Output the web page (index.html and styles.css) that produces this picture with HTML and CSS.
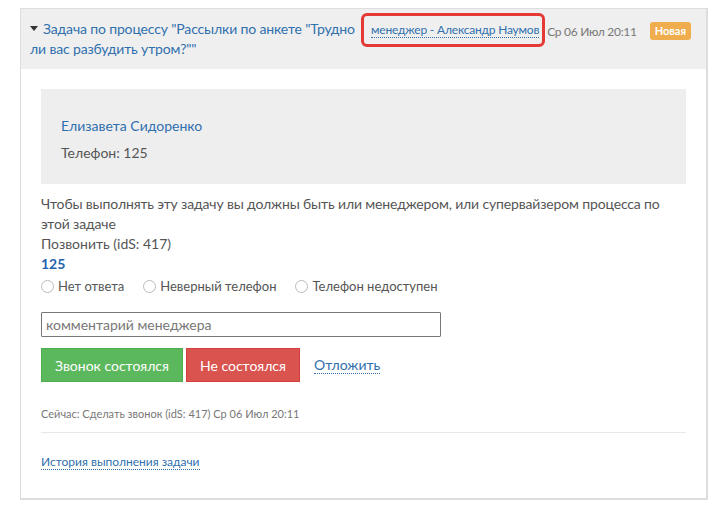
FILE: index.html
```html
<!DOCTYPE html>
<html lang="ru">
<head>
<meta charset="utf-8">
<title>Задача</title>
<link rel="stylesheet" href="styles.css">
</head>
<body>
<div class="panel">
  <div class="panel-head">
    <div class="title"><svg class="caret" width="8" height="6" viewBox="0 0 8 6"><path d="M0 0 H8 L4 5 Z" fill="#333"/></svg>Задача по процессу "Рассылки по анкете "Трудно ли вас разбудить утром?""</div>
    <div class="meta">
      <span class="mgr-wrap"><a class="mgr">менеджер - Александр Наумов</a></span>
      <span class="date">Ср 06 Июл 20:11</span>
      <span class="badge">Новая</span>
    </div>
  </div>
  <div class="panel-body">
    <div class="client">
      <p class="client-name">Елизавета Сидоренко</p>
      <p class="client-phone">Телефон: 125</p>
    </div>
    <p class="notice">Чтобы выполнять эту задачу вы должны быть или менеджером, или супервайзером процесса по этой задаче</p>
    <p class="line">Позвонить (idS: 417)</p>
    <p class="phone">125</p>
    <div class="radios">
      <label class="radio"><span class="circle"></span>Нет ответа</label>
      <label class="radio"><span class="circle"></span>Неверный телефон</label>
      <label class="radio"><span class="circle"></span>Телефон недоступен</label>
    </div>
    <input class="comment" type="text" placeholder="комментарий менеджера">
    <div class="actions">
      <button class="btn btn-green">Звонок состоялся</button>
      <button class="btn btn-red">Не состоялся</button>
      <a class="later">Отложить</a>
    </div>
    <p class="now">Сейчас: Сделать звонок (idS: 417) Ср 06 Июл 20:11</p>
    <hr class="sep">
    <a class="history">История выполнения задачи</a>
  </div>
</div>
</body>
</html>
```
FILE: styles.css
```css
html, body {
  margin: 0;
  padding: 0;
  background: #fff;
}
body {
  padding: 8px 17px 0 20px;
  font-family: Lato, "Open Sans", sans-serif;
  font-size: 14px;
  color: #555;
}
p { margin: 0; }
.panel {
  border: 1px solid #ddd;
  border-width: 1px 2px 2px 1px;
  width: 685px;
}
.panel-head {
  background: #efefef;
  padding: 10px 15px 10px 9px;
  display: flex;
  align-items: flex-start;
  line-height: 20px;
}
.title {
  width: 340px;
  color: #2f6fae;
  font-size: 14px;
  letter-spacing: -0.15px;
}
.caret {
  margin: 0 5px 2px 0;
  vertical-align: middle;
}
.meta {
  display: flex;
  align-items: center;
  margin-left: auto;
  white-space: nowrap;
}
.mgr-wrap {
  border: 3px solid #e53935;
  border-radius: 6px;
  padding: 4px 3px 5px 7px;
  margin-top: -6px;
  line-height: 18px;
}
.mgr {
  color: #2f6fae;
  font-size: 12px;
  letter-spacing: -0.2px;
  border-bottom: 1px dotted #2f6fae;
}
.date {
  margin-left: 2px;
  color: #777;
  font-size: 12px;
  letter-spacing: -0.3px;
  margin-top: -2px;
}
.badge {
  margin-left: 13px;
  margin-top: -4px;
  background: #f0ad4e;
  color: #fff;
  font-weight: bold;
  font-size: 11px;
  border-radius: 3px;
  padding: 0 5px;
  line-height: 18px;
}
.panel-body {
  padding: 20px 20px 27px 20px;
  line-height: 20px;
}
.client {
  background: #eee;
  padding: 27px 20px 21px;
}
.client-name {
  color: #2f6fae;
}
.client-phone {
  margin-top: 7px;
}
.notice {
  margin-top: 10px;
  letter-spacing: -0.15px;
}
.phone {
  color: #1f63ad;
  font-weight: bold;
}
.radios {
  display: flex;
  gap: 19px;
  margin-top: 2px;
}
.radio {
  display: flex;
  align-items: center;
  gap: 4px;
  font-size: 13px;
}
.circle {
  width: 11px;
  height: 11px;
  border: 1px solid #bbb;
  border-radius: 50%;
  background: #fff;
}
.comment {
  display: block;
  box-sizing: border-box;
  margin-top: 16px;
  width: 400px;
  height: 25px;
  border: 1px solid #777;
  border-radius: 1px;
  padding: 0 4px;
  font-family: inherit;
  font-size: 14px;
  color: #555;
}
.comment::placeholder { color: #777; }
.actions {
  display: flex;
  align-items: center;
  margin-top: 11px;
}
.btn {
  height: 34px;
  box-sizing: border-box;
  border: 1px solid;
  color: #fff;
  font-family: inherit;
  font-size: 14px;
  padding: 0 13px;
  border-radius: 0;
  white-space: nowrap;
}
.btn-green {
  background: #5cb85c;
  border-color: #4cae4c;
}
.btn-red {
  background: #d9534f;
  border-color: #d43f3a;
  margin-left: 3px;
}
.later {
  margin-left: 14px;
  color: #2f6fae;
  border-bottom: 1px dotted #2f6fae;
  line-height: 17px;
}
.now {
  margin-top: 22px;
  font-size: 11px;
  color: #777;
}
.sep {
  border: 0;
  border-top: 1px solid #e8e8e8;
  margin: 8px 0 18px;
}
.history {
  color: #2f6fae;
  font-size: 12px;
  border-bottom: 1px dotted #2f6fae;
  line-height: 17px;
}
```
